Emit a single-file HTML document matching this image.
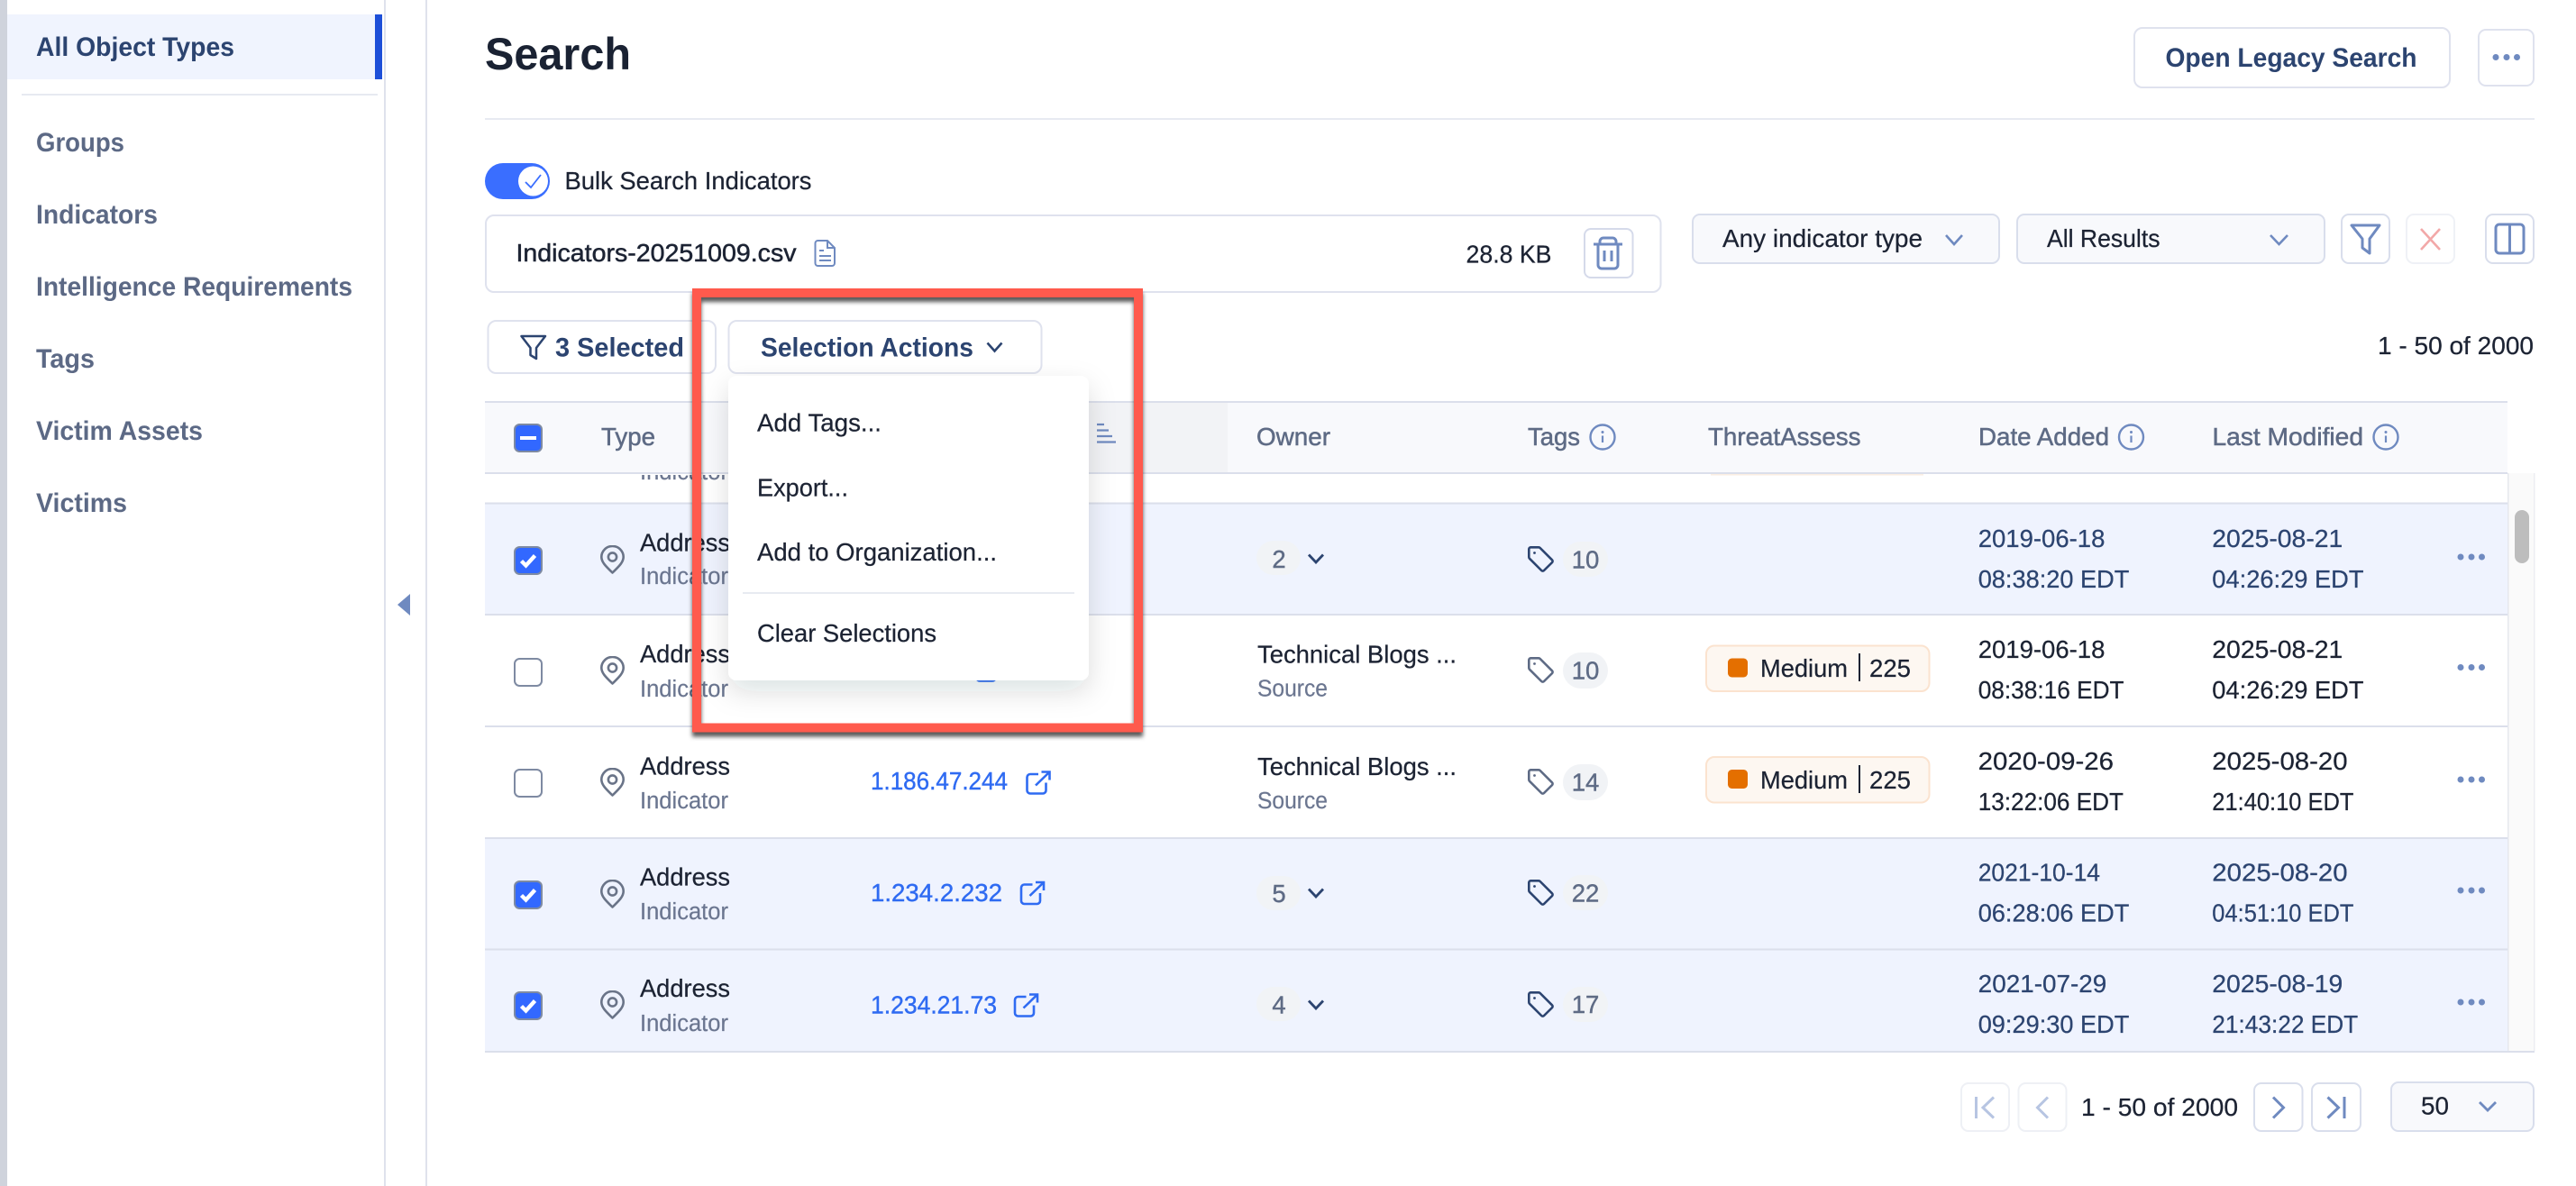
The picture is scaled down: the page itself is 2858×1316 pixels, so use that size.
<!DOCTYPE html>
<html lang="en"><head><meta charset="utf-8"><title>Search</title>
<style>
html,body{margin:0;padding:0;background:#fff;width:2858px;height:1316px;overflow:hidden}
svg{display:block}
text{font-family:"Liberation Sans",sans-serif;font-size:27.5px;fill:#1c2333;stroke:#1c2333;stroke-width:.25}
.nav{font-size:30px;font-weight:700;fill:#5c6985;stroke:none}
.b{font-size:29.5px;font-weight:700;fill:#2c4470;stroke:none}
.h{font-size:27.5px;fill:#5e6b85;stroke:#5e6b85;stroke-width:.5}
.sub{font-size:25.5px;fill:#6b7690;stroke:#6b7690;stroke-width:.2}
.lnk{font-size:27.5px;fill:#2f6bf2;stroke:#2f6bf2;stroke-width:.4}
.d{font-size:27.5px}
.ds{font-size:27.5px;fill:#2c4470;stroke:#2c4470;stroke-width:.25}
.n{font-size:27.5px;fill:#5e6b85;stroke:#5e6b85;stroke-width:.4}
.m{font-size:27.5px}
</style></head><body>
<svg xmlns="http://www.w3.org/2000/svg" width="2858" height="1316" viewBox="0 0 2858 1316">
<defs>
<filter id="ds" x="-30%" y="-30%" width="160%" height="170%"><feDropShadow dx="0" dy="12" stdDeviation="15" flood-color="#1c2333" flood-opacity=".14"/></filter>
<filter id="rs" x="-5%" y="-5%" width="110%" height="110%"><feDropShadow dx="0" dy="5" stdDeviation="2.5" flood-color="#000" flood-opacity=".65"/></filter>
<clipPath id="body"><rect x="538" y="527" width="2245" height="640"/></clipPath>
<symbol id="pin" viewBox="0 0 27 32" width="27" height="32"><path d="M13.5 30.5 C8 25 1.3 19.5 1.3 13 A12.2 12 0 0 1 25.7 13 C25.7 19.5 19 25 13.5 30.5Z" fill="none" stroke="#6a7488" stroke-width="2.6" stroke-linejoin="round"/><circle cx="13.5" cy="13" r="4.6" fill="none" stroke="#6a7488" stroke-width="2.6"/></symbol>
<symbol id="tag" viewBox="0 0 29 29" width="29" height="29"><path d="M1.3 3.3a2 2 0 0 1 2-2H12a2.4 2.4 0 0 1 1.7.7L27 15.300a2 2 0 0 1 0 2.800L18 27a2 2 0 0 1-2.800 0L2 13.800a2.400 2.400 0 0 1-.7-1.700Z" fill="none" stroke="currentColor" stroke-width="2.6" stroke-linejoin="round"/><circle cx="7.500" cy="7.500" r="1.400" fill="currentColor"/></symbol>
<symbol id="ext" viewBox="0 0 28 27" width="28" height="27"><path d="M14 4H5a3.500 3.500 0 0 0-3.500 3.500V22A3.500 3.500 0 0 0 5 25.500H19a3.500 3.500 0 0 0 3.500-3.500V13.500M11 16.500 26.500 1.500M17.500 1.500h9V10.500" fill="none" stroke="#2f6bf2" stroke-width="2.600"/></symbol>
<symbol id="info" viewBox="0 0 30 30" width="30" height="30"><circle cx="15" cy="15" r="13.500" fill="none" stroke="#6f8ac0" stroke-width="2.400"/><path d="M15 13.500V21" stroke="#6f8ac0" stroke-width="2.200"/><circle cx="15" cy="9.500" r="1.500" fill="#6f8ac0"/></symbol>
<symbol id="chk" viewBox="0 0 32 32" width="32" height="32"><rect x="1" y="1" width="30" height="30" rx="5.500" fill="#3268ff" stroke="#7e8aa2" stroke-width="2"/><path d="M8.500 16.500 13.500 21.500 23.500 10.500" fill="none" stroke="#fff" stroke-width="4.400"/></symbol>
<symbol id="unc" viewBox="0 0 32 32" width="32" height="32"><rect x="1" y="1" width="30" height="30" rx="5.500" fill="#fff" stroke="#7e8aa2" stroke-width="2"/></symbol>
<symbol id="dots" viewBox="0 0 32 8" width="32" height="8"><circle cx="4" cy="4" r="3.500" fill="#6f8ac0"/><circle cx="16" cy="4" r="3.500" fill="#6f8ac0"/><circle cx="27.500" cy="4" r="3.500" fill="#6f8ac0"/></symbol>
<symbol id="cv" viewBox="0 0 19 12" width="19" height="12"><path d="M1.500 1.500 9.500 10 17.500 1.500" fill="none" stroke="currentColor" stroke-width="2.800"/></symbol>
</defs>

<rect width="2858" height="1316" fill="#fff"/>
<!-- sidebar -->
<rect x="0" y="0" width="8" height="1316" fill="#cfd3dc"/>
<rect x="426" y="0" width="2" height="1316" fill="#dfe2ec"/>
<rect x="472" y="0" width="2" height="1316" fill="#dfe2ec"/>
<rect x="8" y="16" width="416" height="72" fill="#f0f4fe"/>
<rect x="416" y="16" width="8" height="72" fill="#1d4fd8"/>
<rect x="24" y="104" width="395" height="2" fill="#e7eaf1"/>
<text class="nav" x="40" y="62" textLength="220" lengthAdjust="spacingAndGlyphs" style="fill:#2c4470">All Object Types</text>
<text class="nav" x="40" y="168" textLength="98" lengthAdjust="spacingAndGlyphs">Groups</text>
<text class="nav" x="40" y="248" textLength="135" lengthAdjust="spacingAndGlyphs">Indicators</text>
<text class="nav" x="40" y="328" textLength="351" lengthAdjust="spacingAndGlyphs">Intelligence Requirements</text>
<text class="nav" x="40" y="408" textLength="65" lengthAdjust="spacingAndGlyphs">Tags</text>
<text class="nav" x="40" y="488" textLength="185" lengthAdjust="spacingAndGlyphs">Victim Assets</text>
<text class="nav" x="40" y="568" textLength="101" lengthAdjust="spacingAndGlyphs">Victims</text>
<path d="M455 659V683L441 671Z" fill="#6f8ac0"/>

<!-- top -->
<text x="538" y="77" textLength="162" lengthAdjust="spacingAndGlyphs" style="font-size:50px;font-weight:700;fill:#1a2233;stroke:none">Search</text>
<rect x="538" y="131" width="2274" height="2" fill="#e7eaf1"/>
<rect x="2368" y="31" width="350" height="66" rx="9" fill="#fff" stroke="#dfe2ee" stroke-width="2"/>
<text class="b" x="2402.500" y="74" textLength="279" lengthAdjust="spacingAndGlyphs">Open Legacy Search</text>
<rect x="2750" y="33" width="61" height="62" rx="8" fill="#fff" stroke="#dfe2ee" stroke-width="2"/>
<use href="#dots" x="2765" y="59.500"/>

<!-- toggle -->
<rect x="538" y="181" width="72" height="40" rx="20" fill="#3a6eff"/>
<circle cx="591.500" cy="201" r="16.500" fill="#fff"/>
<path d="M583 202 589 208 600 194" fill="none" stroke="#3a6eff" stroke-width="1.800"/>
<text x="626.500" y="210" textLength="274" lengthAdjust="spacingAndGlyphs">Bulk Search Indicators</text>

<!-- file box -->
<rect x="539" y="239" width="1303.500" height="85" rx="9" fill="#fff" stroke="#dfe2ee" stroke-width="2"/>
<text x="572.500" y="290" textLength="311" lengthAdjust="spacingAndGlyphs" style="stroke-width:.5">Indicators-20251009.csv</text>
<path d="M904.500 270a3 3 0 0 1 3-3H918l8 8v17a3 3 0 0 1-3 3H907.500a3 3 0 0 1-3-3ZM918 267v8h8M909 278h5M909 284h13M909 289h13" fill="none" stroke="#6f8ac0" stroke-width="2"/>
<text x="1626.500" y="291.500" textLength="95" lengthAdjust="spacingAndGlyphs">28.8 KB</text>
<rect x="1758" y="254" width="53.500" height="54" rx="7" fill="#fff" stroke="#d5daea" stroke-width="2"/>
<path d="M1768 271H1800M1775 270V268a4 4 0 0 1 4-4h10a4 4 0 0 1 4 4v2M1773 272V294a4 4 0 0 0 4 4h14a4 4 0 0 0 4-4V272M1780 278v12M1788 278v12" fill="none" stroke="#6f8ac0" stroke-width="3"/>

<!-- filters -->
<rect x="1878" y="238" width="340" height="54" rx="8" fill="#f8f9fc" stroke="#d9deec" stroke-width="2"/>
<text x="1911" y="274" textLength="222" lengthAdjust="spacingAndGlyphs">Any indicator type</text>
<path d="M2159 261 2168 271 2177 261" fill="none" stroke="#6f8ac0" stroke-width="2.600"/>
<rect x="2238" y="238" width="341" height="54" rx="8" fill="#f8f9fc" stroke="#d9deec" stroke-width="2"/>
<text x="2271" y="274" textLength="125.500" lengthAdjust="spacingAndGlyphs">All Results</text>
<path d="M2519 261 2528.500 271 2538 261" fill="none" stroke="#6f8ac0" stroke-width="2.600"/>
<rect x="2598" y="238" width="53" height="54" rx="8" fill="#fff" stroke="#d9deec" stroke-width="2"/>
<path d="M2609 250H2640L2629 265V281L2621 275V265Z" fill="none" stroke="#6f8ac0" stroke-width="3" stroke-linejoin="round"/>
<rect x="2670" y="238" width="53" height="54" rx="8" fill="#fff" stroke="#eff1f6" stroke-width="2"/>
<path d="M2686 254 2707 277M2707 254 2686 277" fill="none" stroke="#f2a8a8" stroke-width="2.600"/>
<rect x="2758" y="238" width="53" height="54" rx="8" fill="#fff" stroke="#d9deec" stroke-width="2"/>
<rect x="2769" y="249" width="31" height="32" rx="4" fill="none" stroke="#6f8ac0" stroke-width="3"/>
<path d="M2784.500 249v32" stroke="#6f8ac0" stroke-width="3"/>

<!-- selection toolbar -->
<rect x="541.500" y="356" width="252.500" height="58" rx="9" fill="#fff" stroke="#dfe2ee" stroke-width="2"/>
<path d="M578.500 373H605L595 386V398L588.500 394V386Z" fill="none" stroke="#2c4470" stroke-width="2.500" stroke-linejoin="round"/>
<text class="b" x="616" y="395.500" textLength="143" lengthAdjust="spacingAndGlyphs">3 Selected</text>
<rect x="808.500" y="356" width="347" height="58" rx="9" fill="#fff" stroke="#dfe2ee" stroke-width="2"/>
<text class="b" x="844" y="395.500" textLength="236" lengthAdjust="spacingAndGlyphs">Selection Actions</text>
<path d="M1095.500 380.500 1103.500 389.500 1111.500 380.500" fill="none" stroke="#2c4470" stroke-width="2.600"/>
<text x="2638" y="393" textLength="173" lengthAdjust="spacingAndGlyphs">1 - 50 of 2000</text>

<!-- table rows -->
<rect x="538" y="525" width="2245" height="34" fill="#fff"/>
<rect x="538" y="559" width="2245" height="123" fill="#eff3fe"/>
<rect x="538" y="930" width="2245" height="237" fill="#eff3fe"/>
<g fill="#dbdfeb">
<rect x="538" y="557.500" width="2245" height="2"/><rect x="538" y="681" width="2245" height="2"/><rect x="538" y="805" width="2245" height="2"/><rect x="538" y="929" width="2245" height="2"/><rect x="538" y="1052.500" width="2245" height="2"/><rect x="538" y="1166" width="2274" height="2"/>
</g>
<rect x="1898" y="526" width="236" height="1.500" fill="#fbeee2"/>
<!-- scrollbar -->
<rect x="2783" y="525" width="29" height="641" fill="#fafafa"/>
<rect x="2782" y="525" width="1.500" height="641" fill="#e6e8ee"/><rect x="2811" y="525" width="1.500" height="641" fill="#eceef2"/>
<rect x="2790" y="566" width="16" height="59" rx="8" fill="#bdbdbd"/>

<g clip-path="url(#body)">
<text class="sub" x="710" y="532" textLength="98" lengthAdjust="spacingAndGlyphs">Indicator</text>
</g>

<!-- row labels -->
<use href="#chk" x="570" y="606"/><use href="#pin" x="666" y="605"/>
<text class="m" x="710" y="611.500" textLength="100" lengthAdjust="spacingAndGlyphs">Address</text>
<text class="sub" x="710" y="648" textLength="98" lengthAdjust="spacingAndGlyphs">Indicator</text>

<use href="#unc" x="570" y="730"/><use href="#pin" x="666" y="728"/>
<text class="m" x="710" y="735" textLength="100" lengthAdjust="spacingAndGlyphs">Address</text>
<text class="sub" x="710" y="773" textLength="98" lengthAdjust="spacingAndGlyphs">Indicator</text>
<use href="#ext" x="1082" y="730"/>

<use href="#unc" x="570" y="853"/><use href="#pin" x="666" y="852"/>
<text class="m" x="710" y="859.500" textLength="100" lengthAdjust="spacingAndGlyphs">Address</text>
<text class="sub" x="710" y="897" textLength="98" lengthAdjust="spacingAndGlyphs">Indicator</text>
<text class="lnk" x="966" y="876" textLength="152" lengthAdjust="spacingAndGlyphs">1.186.47.244</text>
<use href="#ext" x="1138" y="855"/>

<use href="#chk" x="570" y="977"/><use href="#pin" x="666" y="976"/>
<text class="m" x="710" y="982.500" textLength="100" lengthAdjust="spacingAndGlyphs">Address</text>
<text class="sub" x="710" y="1020" textLength="98" lengthAdjust="spacingAndGlyphs">Indicator</text>
<text class="lnk" x="966" y="1000" textLength="146" lengthAdjust="spacingAndGlyphs">1.234.2.232</text>
<use href="#ext" x="1131.500" y="977.500"/>

<use href="#chk" x="570" y="1100"/><use href="#pin" x="666" y="1099"/>
<text class="m" x="710" y="1106" textLength="100" lengthAdjust="spacingAndGlyphs">Address</text>
<text class="sub" x="710" y="1144" textLength="98" lengthAdjust="spacingAndGlyphs">Indicator</text>
<text class="lnk" x="966" y="1124.500" textLength="140" lengthAdjust="spacingAndGlyphs">1.234.21.73</text>
<use href="#ext" x="1124.500" y="1102"/>

<!-- owner -->
<rect x="1394" y="600" width="49" height="38" rx="19" fill="#f1f3f6"/>
<text class="n" x="1419" y="630" text-anchor="middle">2</text>
<use href="#cv" x="1450.500" y="614" style="color:#2c4470"/>
<text x="1395" y="735.500" textLength="221" lengthAdjust="spacingAndGlyphs">Technical Blogs ...</text>
<text class="sub" x="1395" y="772.500" textLength="78" lengthAdjust="spacingAndGlyphs">Source</text>
<text x="1395" y="860" textLength="221" lengthAdjust="spacingAndGlyphs">Technical Blogs ...</text>
<text class="sub" x="1395" y="897" textLength="78" lengthAdjust="spacingAndGlyphs">Source</text>
<rect x="1394" y="972" width="49" height="38" rx="19" fill="#f1f3f6"/>
<text class="n" x="1419" y="1001" text-anchor="middle">5</text>
<use href="#cv" x="1450.500" y="985" style="color:#2c4470"/>
<rect x="1394" y="1095" width="49" height="38" rx="19" fill="#f1f3f6"/>
<text class="n" x="1419" y="1124.500" text-anchor="middle">4</text>
<use href="#cv" x="1450.500" y="1109" style="color:#2c4470"/>

<!-- tags -->
<use href="#tag" x="1695" y="606" style="color:#2c4470"/>
<rect x="1734" y="601" width="50" height="39" rx="19.500" fill="#f1f3f6"/>
<text class="n" x="1759" y="630.500" text-anchor="middle">10</text>
<use href="#tag" x="1695" y="729" style="color:#5e6b85"/>
<rect x="1734" y="724" width="50" height="40" rx="20" fill="#f1f3f6"/>
<text class="n" x="1759" y="753.500" text-anchor="middle">10</text>
<use href="#tag" x="1695" y="853" style="color:#5e6b85"/>
<rect x="1734" y="848" width="50" height="40" rx="20" fill="#f1f3f6"/>
<text class="n" x="1759" y="877.500" text-anchor="middle">14</text>
<use href="#tag" x="1695" y="976" style="color:#2c4470"/>
<rect x="1734" y="971" width="50" height="39" rx="19.500" fill="#f1f3f6"/>
<text class="n" x="1759" y="1000.500" text-anchor="middle">22</text>
<use href="#tag" x="1695" y="1100" style="color:#2c4470"/>
<rect x="1734" y="1095" width="50" height="39" rx="19.500" fill="#f1f3f6"/>
<text class="n" x="1759" y="1124" text-anchor="middle">17</text>

<!-- threat -->
<rect x="1893" y="716.500" width="247.500" height="50.500" rx="9" fill="#fdf7f1" stroke="#fbe3cf" stroke-width="2"/>
<rect x="1917" y="730.500" width="22" height="21" rx="4.500" fill="#e46f00"/>
<text x="1953" y="751" textLength="97" lengthAdjust="spacingAndGlyphs">Medium</text>
<rect x="2062" y="725" width="2" height="31" fill="#1c2333"/>
<text x="2074" y="751" textLength="46" lengthAdjust="spacingAndGlyphs">225</text>
<rect x="1893" y="840" width="247.500" height="50.500" rx="9" fill="#fdf7f1" stroke="#fbe3cf" stroke-width="2"/>
<rect x="1917" y="854" width="22" height="21" rx="4.500" fill="#e46f00"/>
<text x="1953" y="875" textLength="97" lengthAdjust="spacingAndGlyphs">Medium</text>
<rect x="2062" y="849" width="2" height="31" fill="#1c2333"/>
<text x="2074" y="875" textLength="46" lengthAdjust="spacingAndGlyphs">225</text>

<!-- dates -->
<text class="ds" x="2194.700" y="607" textLength="140.700" lengthAdjust="spacingAndGlyphs">2019-06-18</text>
<text class="ds" x="2194.700" y="652" textLength="167.700" lengthAdjust="spacingAndGlyphs">08:38:20 EDT</text>
<text class="ds" x="2454.300" y="607" textLength="145" lengthAdjust="spacingAndGlyphs">2025-08-21</text>
<text class="ds" x="2454.300" y="652" textLength="168.200" lengthAdjust="spacingAndGlyphs">04:26:29 EDT</text>
<text class="d" x="2194.700" y="730" textLength="140.700" lengthAdjust="spacingAndGlyphs">2019-06-18</text>
<text class="d" x="2194.700" y="775" textLength="161.900" lengthAdjust="spacingAndGlyphs">08:38:16 EDT</text>
<text class="d" x="2454.300" y="730" textLength="145" lengthAdjust="spacingAndGlyphs">2025-08-21</text>
<text class="d" x="2454.300" y="775" textLength="168.200" lengthAdjust="spacingAndGlyphs">04:26:29 EDT</text>
<text class="d" x="2194.700" y="854" textLength="150.300" lengthAdjust="spacingAndGlyphs">2020-09-26</text>
<text class="d" x="2194.700" y="899" textLength="161.300" lengthAdjust="spacingAndGlyphs">13:22:06 EDT</text>
<text class="d" x="2454.300" y="854" textLength="150.300" lengthAdjust="spacingAndGlyphs">2025-08-20</text>
<text class="d" x="2454.300" y="899" textLength="157.100" lengthAdjust="spacingAndGlyphs">21:40:10 EDT</text>
<text class="ds" x="2194.700" y="977.500" textLength="135.300" lengthAdjust="spacingAndGlyphs">2021-10-14</text>
<text class="ds" x="2194.700" y="1022.500" textLength="167.700" lengthAdjust="spacingAndGlyphs">06:28:06 EDT</text>
<text class="ds" x="2454.300" y="977.500" textLength="150.300" lengthAdjust="spacingAndGlyphs">2025-08-20</text>
<text class="ds" x="2454.300" y="1022.500" textLength="157.100" lengthAdjust="spacingAndGlyphs">04:51:10 EDT</text>
<text class="ds" x="2194.700" y="1101" textLength="142.600" lengthAdjust="spacingAndGlyphs">2021-07-29</text>
<text class="ds" x="2194.700" y="1146" textLength="167.700" lengthAdjust="spacingAndGlyphs">09:29:30 EDT</text>
<text class="ds" x="2454.300" y="1101" textLength="145" lengthAdjust="spacingAndGlyphs">2025-08-19</text>
<text class="ds" x="2454.300" y="1146" textLength="161.900" lengthAdjust="spacingAndGlyphs">21:43:22 EDT</text>
<use href="#dots" x="2726" y="614"/><use href="#dots" x="2726" y="736.500"/><use href="#dots" x="2726" y="861"/><use href="#dots" x="2726" y="984"/><use href="#dots" x="2726" y="1108"/>

<!-- table header -->
<rect x="538" y="445" width="2244" height="81" fill="#f8f9fc"/>
<rect x="1200" y="447" width="162" height="77" fill="#f2f3f6"/>
<rect x="538" y="445" width="2244" height="2" fill="#dbdfeb"/>
<rect x="538" y="524" width="2244" height="2" fill="#dbdfeb"/>
<rect x="571" y="471" width="30" height="30" rx="5.500" fill="#3268ff" stroke="#7e8aa2" stroke-width="2"/>
<rect x="577" y="484" width="18" height="4" fill="#fff"/>
<text class="h" x="667" y="494" textLength="60" lengthAdjust="spacingAndGlyphs">Type</text>
<path d="M1217 471h8M1217 477.500h13M1217 484h17M1217 490.500h21" stroke="#6f8ac0" stroke-width="2.200"/>
<text class="h" x="1394" y="494" textLength="82" lengthAdjust="spacingAndGlyphs">Owner</text>
<text class="h" x="1695" y="494" textLength="58" lengthAdjust="spacingAndGlyphs">Tags</text>
<use href="#info" x="1763" y="470"/>
<text class="h" x="1895" y="494" textLength="169.500" lengthAdjust="spacingAndGlyphs">ThreatAssess</text>
<text class="h" x="2195" y="494" textLength="145" lengthAdjust="spacingAndGlyphs">Date Added</text>
<use href="#info" x="2349.500" y="470"/>
<text class="h" x="2454.500" y="494" textLength="167.500" lengthAdjust="spacingAndGlyphs">Last Modified</text>
<use href="#info" x="2632" y="470"/>

<!-- dropdown -->
<rect x="808" y="417" width="400" height="338" rx="9" fill="#fff" filter="url(#ds)"/>
<text class="m" x="840" y="478.500" textLength="138" lengthAdjust="spacingAndGlyphs">Add Tags...</text>
<text class="m" x="840" y="550.500" textLength="101" lengthAdjust="spacingAndGlyphs">Export...</text>
<text class="m" x="840" y="622" textLength="266" lengthAdjust="spacingAndGlyphs">Add to Organization...</text>
<rect x="824" y="657" width="368" height="2" fill="#e7eaf1"/>
<text class="m" x="840" y="712" textLength="199" lengthAdjust="spacingAndGlyphs">Clear Selections</text>

<!-- pagination -->
<rect x="2176" y="1202" width="53" height="53" rx="8" fill="#fff" stroke="#eef0f5" stroke-width="2"/>
<path d="M2192.500 1217V1241M2212 1217.500 2200 1229 2212 1240.500" fill="none" stroke="#b7c5e2" stroke-width="3"/>
<rect x="2239.500" y="1202" width="53" height="53" rx="8" fill="#fff" stroke="#eef0f5" stroke-width="2"/>
<path d="M2272 1217.500 2260.500 1229 2272 1240.500" fill="none" stroke="#b7c5e2" stroke-width="3"/>
<text x="2309" y="1238" textLength="174" lengthAdjust="spacingAndGlyphs">1 - 50 of 2000</text>
<rect x="2501" y="1202" width="53.500" height="53" rx="8" fill="#fff" stroke="#d9deec" stroke-width="2"/>
<path d="M2522 1217.500 2533.500 1229 2522 1240.500" fill="none" stroke="#6f8ac0" stroke-width="3"/>
<rect x="2565" y="1202" width="54" height="53" rx="8" fill="#fff" stroke="#d9deec" stroke-width="2"/>
<path d="M2582.500 1217.500 2594.500 1229 2582.500 1240.500M2601 1217V1241" fill="none" stroke="#6f8ac0" stroke-width="3"/>
<rect x="2653" y="1201" width="158" height="54" rx="8" fill="#f8f9fc" stroke="#d9deec" stroke-width="2"/>
<text x="2686" y="1236.500" textLength="31" lengthAdjust="spacingAndGlyphs">50</text>
<path d="M2751 1223 2760 1232 2769 1223" fill="none" stroke="#6f8ac0" stroke-width="2.800"/>

<!-- annotation -->
<rect x="773" y="325" width="490" height="482.500" fill="none" stroke="#ff5a4d" stroke-width="10" filter="url(#rs)"/>
</svg>
</body></html>
